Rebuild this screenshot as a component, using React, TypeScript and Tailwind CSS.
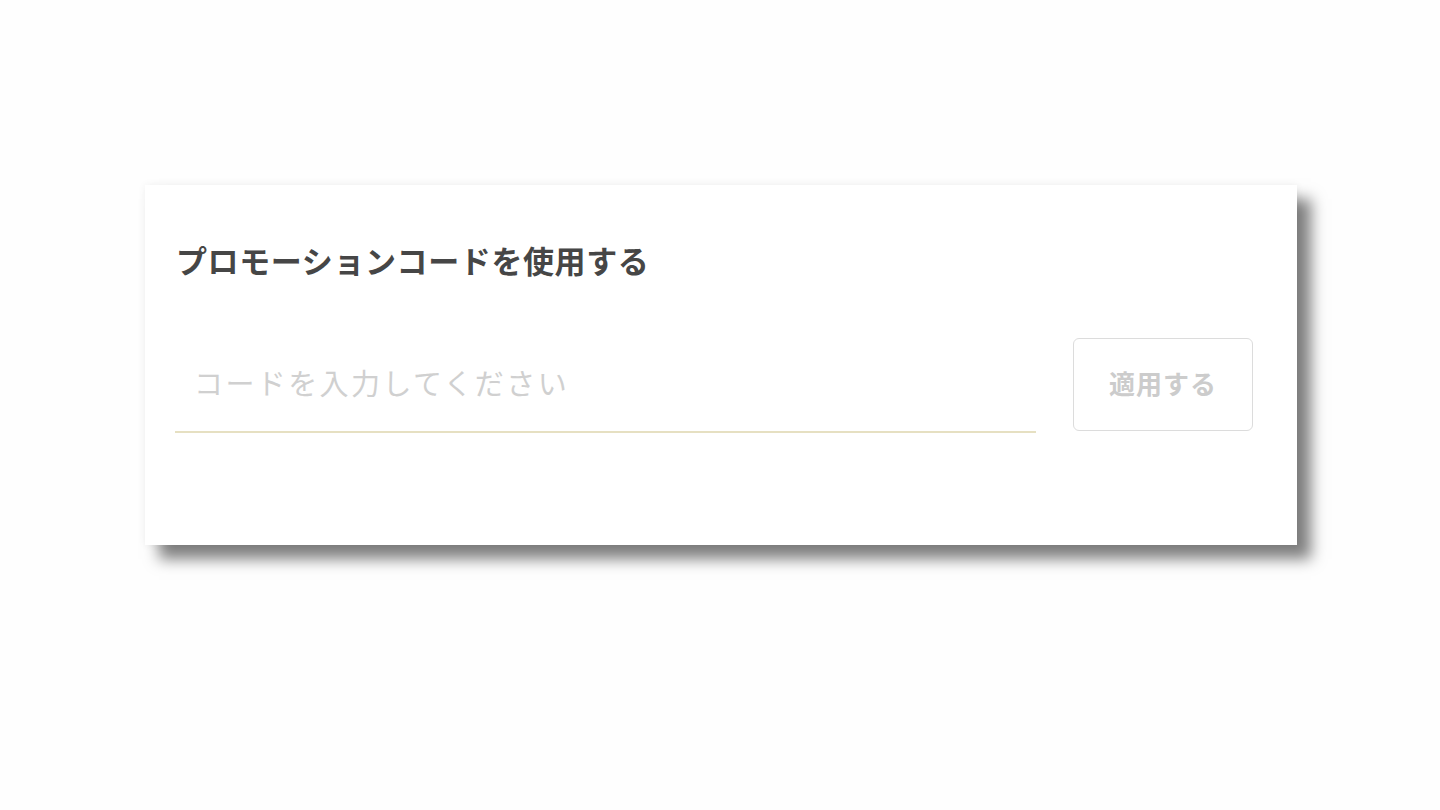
export default function App() {
  return (
    <div
      className="min-h-[810px] w-full bg-[#fefefe] pl-[145px] pt-[185px]"
      style={{ fontFamily: '"Noto Sans CJK JP", "Noto Sans", sans-serif' }}
    >
      <div className="w-[1152px] bg-white pl-[30px] pr-[44px] pt-[55px] pb-[112px] shadow-[14px_14px_14px_rgba(0,0,0,0.5),0_0_8px_rgba(0,0,0,0.06)]">
        <h2 className="text-[31px] leading-[40px] font-bold tracking-[0.6px] text-[#464646] pl-[1px]">
          プロモーションコードを使用する
        </h2>

        <div className="mt-[58px] flex items-end gap-[37px]">
          <input
            type="text"
            placeholder="コードを入力してください"
            className="h-[95px] flex-1 border-b-2 border-[#e6e0c2] bg-transparent pb-[6px] pl-[19px] text-[29px] tracking-[2.4px] text-[#444] outline-none placeholder:text-[#d0d0d0]"
          />
          <button className="mb-[2px] h-[93px] w-[180px] rounded-[6px] border border-[#dcdcdc] bg-white pb-[5px] text-[26px] font-bold tracking-[1px] text-[#cccccc]">
            適用する
          </button>
        </div>
      </div>
    </div>
  );
}
